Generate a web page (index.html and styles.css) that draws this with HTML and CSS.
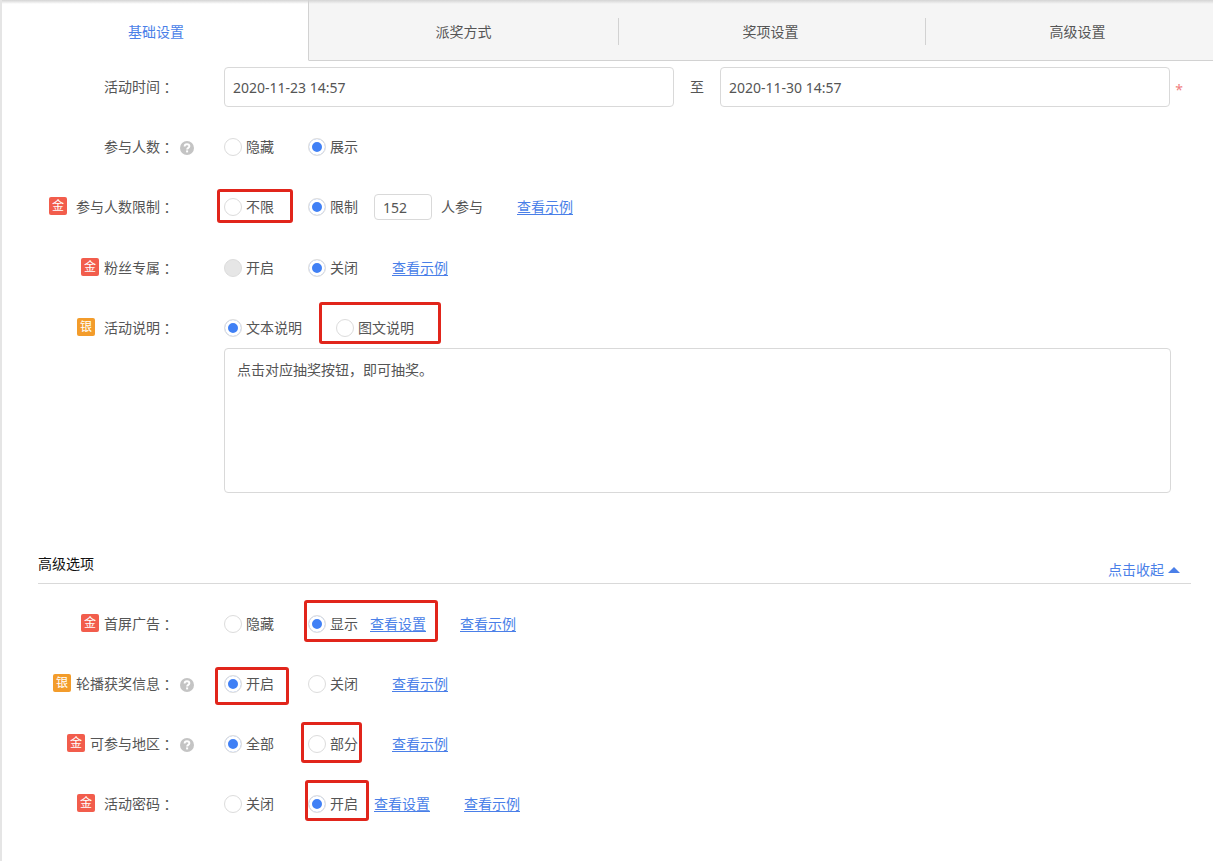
FILE: index.html
```html
<!DOCTYPE html>
<html lang="zh-CN">
<head>
<meta charset="utf-8">
<title>基础设置</title>
<link rel="stylesheet" href="styles.css">
</head>
<body>
<main class="panel">
  <nav class="tabs">
    <button class="tab tab-active" type="button">基础设置</button>
    <button class="tab" type="button">派奖方式</button>
    <button class="tab tab-divided" type="button">奖项设置</button>
    <button class="tab tab-divided" type="button">高级设置</button>
  </nav>

  <form class="form">
    <div class="row">
      <label class="label" for="start">活动时间<span class="colon">：</span></label>
      <div class="field">
        <input class="input date" id="start" type="text" value="2020-11-23 14:57">
        <label class="to" for="end">至</label>
        <input class="input date" id="end" type="text" value="2020-11-30 14:57">
        <span class="required">*</span>
      </div>
    </div>

    <div class="row">
      <div class="label">参与人数<span class="colon">：</span><svg class="help" viewBox="0 0 14 14"><circle cx="7" cy="7" r="7" fill="#c4c4c4"/><path d="M4.6 5.6C4.6 4 5.6 3.2 7 3.2s2.4.9 2.4 2.1c0 1.6-2.3 1.6-2.3 3.2" fill="none" stroke="#fff" stroke-width="1.9"/><rect x="6.1" y="9.4" width="2" height="2" fill="#fff"/></svg></div>
      <div class="field">
        <label class="option"><input class="radio" type="radio" name="count">隐藏</label>
        <label class="option"><input class="radio" type="radio" name="count" checked>展示</label>
      </div>
    </div>

    <div class="row row-limit">
      <div class="label"><span class="badge gold spaced">金</span>参与人数限制<span class="colon">：</span></div>
      <div class="field">
        <label class="option"><input class="radio" type="radio" name="limit">不限<span class="mark mark-unlimited"></span></label>
        <div class="group group-wide">
          <label class="option"><input class="radio" type="radio" name="limit" checked>限制</label>
          <div class="amount"><input class="input number" id="amount" type="text" value="152"><label for="amount">人参与</label></div>
        </div>
        <a class="link" href="#">查看示例</a>
      </div>
    </div>

    <div class="row">
      <div class="label"><span class="badge gold">金</span>粉丝专属<span class="colon">：</span></div>
      <div class="field">
        <label class="option"><input class="radio" type="radio" name="fans" disabled>开启</label>
        <label class="option"><input class="radio" type="radio" name="fans" checked>关闭</label>
        <a class="link" href="#">查看示例</a>
      </div>
    </div>

    <div class="row row-desc">
      <div class="label"><span class="badge silver spaced">银</span>活动说明<span class="colon">：</span></div>
      <div class="field">
        <label class="option"><input class="radio" type="radio" name="desc" checked>文本说明</label>
        <label class="option"><input class="radio" type="radio" name="desc">图文说明<span class="mark mark-rich"></span></label>
      </div>
    </div>
    <div class="description">
      <textarea class="input textarea" aria-label="活动说明">点击对应抽奖按钮，即可抽奖。</textarea>
    </div>

    <div class="section">
      <h2 class="section-title">高级选项</h2>
      <button class="collapse" type="button">点击收起<svg class="arrow" viewBox="0 0 12 6"><path d="M0 6L6 0l6 6z" fill="#4a7fe8"/></svg></button>
    </div>

    <div class="row">
      <div class="label"><span class="badge gold">金</span>首屏广告<span class="colon">：</span></div>
      <div class="field">
        <label class="option"><input class="radio" type="radio" name="ad">隐藏</label>
        <div class="group">
          <label class="option"><input class="radio" type="radio" name="ad" checked>显示</label>
          <a class="link" href="#">查看设置</a>
          <span class="mark mark-ad"></span>
        </div>
        <a class="link" href="#">查看示例</a>
      </div>
    </div>

    <div class="row">
      <div class="label"><span class="badge silver">银</span>轮播获奖信息<span class="colon">：</span><svg class="help" viewBox="0 0 14 14"><circle cx="7" cy="7" r="7" fill="#c4c4c4"/><path d="M4.6 5.6C4.6 4 5.6 3.2 7 3.2s2.4.9 2.4 2.1c0 1.6-2.3 1.6-2.3 3.2" fill="none" stroke="#fff" stroke-width="1.9"/><rect x="6.1" y="9.4" width="2" height="2" fill="#fff"/></svg></div>
      <div class="field">
        <label class="option"><input class="radio" type="radio" name="carousel" checked>开启<span class="mark mark-carousel"></span></label>
        <label class="option"><input class="radio" type="radio" name="carousel">关闭</label>
        <a class="link" href="#">查看示例</a>
      </div>
    </div>

    <div class="row">
      <div class="label"><span class="badge gold">金</span>可参与地区<span class="colon">：</span><svg class="help" viewBox="0 0 14 14"><circle cx="7" cy="7" r="7" fill="#c4c4c4"/><path d="M4.6 5.6C4.6 4 5.6 3.2 7 3.2s2.4.9 2.4 2.1c0 1.6-2.3 1.6-2.3 3.2" fill="none" stroke="#fff" stroke-width="1.9"/><rect x="6.1" y="9.4" width="2" height="2" fill="#fff"/></svg></div>
      <div class="field">
        <label class="option"><input class="radio" type="radio" name="region" checked>全部</label>
        <label class="option"><input class="radio" type="radio" name="region">部分<span class="mark mark-region"></span></label>
        <a class="link" href="#">查看示例</a>
      </div>
    </div>

    <div class="row">
      <div class="label"><span class="badge gold spaced">金</span>活动密码<span class="colon">：</span></div>
      <div class="field">
        <label class="option"><input class="radio" type="radio" name="password">关闭</label>
        <div class="group group-wide">
          <label class="option"><input class="radio" type="radio" name="password" checked>开启<span class="mark mark-password"></span></label>
          <a class="link" href="#">查看设置</a>
        </div>
        <a class="link" href="#">查看示例</a>
      </div>
    </div>
  </form>
</main>
</body>
</html>
```
FILE: styles.css
```css
* {
  box-sizing: border-box;
}

body {
  margin: 0;
  background: #fff;
  color: #555;
  font: 14px/20px "Noto Sans", "Noto Sans CJK SC", sans-serif;
}

input,
textarea,
button {
  margin: 0;
  color: inherit;
  font: inherit;
}

.panel {
  position: relative;
  min-height: 100vh;
  border-left: 2px solid #e5e5e5;
  overflow: hidden;
}

.panel::before {
  content: "";
  position: absolute;
  z-index: 1;
  inset: 0 0 auto;
  height: 4px;
  background: linear-gradient(#d4d4d4, rgba(225, 225, 225, 0));
}

/* The tab strip runs past the right edge of the panel. */
.tabs {
  display: grid;
  grid-template-columns: repeat(4, 1fr);
  margin-right: -17px;
}

.tab {
  position: relative;
  padding: 22px 0 18px 2px;
  border: 0;
  border-bottom: 1px solid #d2d2d2;
  background: #f5f5f5;
  cursor: pointer;
}

.tab-active {
  border-right: 1px solid #d2d2d2;
  border-bottom-color: #fff;
  background: #fff;
  color: #4a7fe8;
}

.tab-divided::before {
  content: "";
  position: absolute;
  top: 18px;
  left: 2px;
  width: 1px;
  height: 27px;
  background: #d2d2d2;
}

.form {
  padding: 6px 30px 17px 36px;
}

.row {
  display: grid;
  grid-template-columns: 156px 1fr;
  column-gap: 30px;
  align-items: center;
  min-height: 40px;
  margin-bottom: 20px;
}

.row-limit {
  margin-bottom: 21px;
}

.row-desc {
  margin-bottom: 0;
}

/* Colons line up at the same edge; help icons sit in the space after it. */
.label {
  position: relative;
  display: flex;
  align-items: center;
  justify-content: flex-end;
  padding-right: 20px;
  white-space: nowrap;
}

/* Centres the full-width colon in its box. */
.colon {
  font-family: "Noto Sans CJK JP", sans-serif;
}

.help {
  position: absolute;
  top: 4px;
  right: 0;
  width: 14px;
  height: 14px;
}

.badge {
  width: 18px;
  height: 18px;
  margin: 0 5px 2px 0;
  border-radius: 2px;
  color: #fff;
  font-size: 12px;
  line-height: 17px;
  text-align: center;
}

.spaced {
  margin-right: 9px;
}

.gold {
  background: #f25d4c;
}

.silver {
  background: #f39c2b;
}

.field {
  display: flex;
  align-items: center;
  gap: 34px;
}

.field:has(.date) {
  gap: 0;
}

.option {
  position: relative;
  display: flex;
  align-items: center;
  gap: 4px;
}

.group {
  position: relative;
  display: flex;
  align-items: center;
  gap: 12px;
}

.group-wide {
  gap: 16px;
}

.radio {
  appearance: none;
  width: 18px;
  height: 18px;
  border: 1px solid #dcdcdc;
  border-radius: 50%;
  background: #fff;
}

.radio:checked {
  background: #4080f5 padding-box;
  box-shadow: inset 0 0 0 3px #fff;
}

.radio:disabled {
  background: #e6e6e6;
}

.input {
  border: 1px solid #d9d9d9;
  border-radius: 4px;
  background: #fff;
  outline: 0;
}

.date {
  flex: 1;
  min-width: 0;
  height: 40px;
  padding: 0 8px;
}

.to {
  width: 46px;
  text-align: center;
}

.required {
  width: 13px;
  padding-top: 6px;
  text-align: right;
  color: #f08080;
}

.amount {
  display: flex;
  align-items: center;
  gap: 9px;
}

.number {
  width: 58px;
  height: 26px;
  padding: 0 8px;
}

.link {
  color: #4a7fe8;
  text-decoration: underline;
  text-underline-offset: 2px;
}

.description {
  padding: 0 12px 0 186px;
}

.textarea {
  display: block;
  width: 100%;
  height: 145px;
  padding: 11px 12px;
  resize: none;
}

.section {
  display: flex;
  align-items: flex-start;
  justify-content: space-between;
  margin: 61px -8px 20px 0;
  border-bottom: 1px solid #d9d9d9;
}

.section-title {
  margin: 0;
  color: #111;
  font-size: 14px;
  font-weight: 400;
  line-height: 20px;
}

.collapse {
  display: flex;
  align-items: center;
  gap: 4px;
  padding: 6px 11px 3px 0;
  border: 0;
  background: none;
  color: #4a7fe8;
  cursor: pointer;
}

.arrow {
  width: 12px;
  height: 6px;
}

/* Red highlight frames drawn over the options they point out. */
.mark {
  position: absolute;
  border: 3px solid #e1251b;
  border-radius: 3px;
  pointer-events: none;
}

.mark-unlimited {
  inset: -8px -19px -6px -7px;
}

.mark-rich {
  inset: -16px -27px -6px -17px;
}

.mark-ad {
  inset: -14px -12px -8px -4px;
}

.mark-carousel {
  inset: -7px -15px -11px -9px;
}

.mark-region {
  inset: -12px -4px -9px -7px;
}

.mark-password {
  inset: -14px -11px -7px -3px;
}
```
